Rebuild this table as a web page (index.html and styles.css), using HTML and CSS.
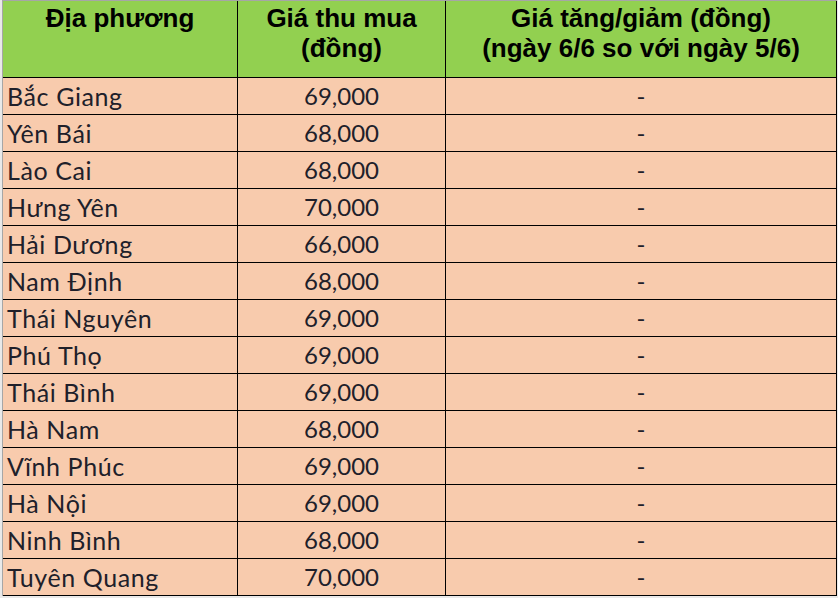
FILE: index.html
```html
<!DOCTYPE html>
<html lang="vi">
<head>
<meta charset="utf-8">
<title>Giá thu mua</title>
<link rel="stylesheet" href="styles.css">
</head>
<body>
<div class="sheet">
  <div class="grid" role="table">
    <div class="cell head" role="columnheader">Địa phương</div>
    <div class="cell head" role="columnheader">Giá thu mua<br>(đồng)</div>
    <div class="cell head" role="columnheader">Giá tăng/giảm (đồng)<br>(ngày 6/6 so với ngày 5/6)</div>

    <div class="cell name">Bắc Giang</div><div class="cell num">69,000</div><div class="cell dash">-</div>
    <div class="cell name">Yên Bái</div><div class="cell num">68,000</div><div class="cell dash">-</div>
    <div class="cell name">Lào Cai</div><div class="cell num">68,000</div><div class="cell dash">-</div>
    <div class="cell name">Hưng Yên</div><div class="cell num">70,000</div><div class="cell dash">-</div>
    <div class="cell name">Hải Dương</div><div class="cell num">66,000</div><div class="cell dash">-</div>
    <div class="cell name">Nam Định</div><div class="cell num">68,000</div><div class="cell dash">-</div>
    <div class="cell name">Thái Nguyên</div><div class="cell num">69,000</div><div class="cell dash">-</div>
    <div class="cell name">Phú Thọ</div><div class="cell num">69,000</div><div class="cell dash">-</div>
    <div class="cell name">Thái Bình</div><div class="cell num">69,000</div><div class="cell dash">-</div>
    <div class="cell name">Hà Nam</div><div class="cell num">68,000</div><div class="cell dash">-</div>
    <div class="cell name">Vĩnh Phúc</div><div class="cell num">69,000</div><div class="cell dash">-</div>
    <div class="cell name">Hà Nội</div><div class="cell num">69,000</div><div class="cell dash">-</div>
    <div class="cell name">Ninh Bình</div><div class="cell num">68,000</div><div class="cell dash">-</div>
    <div class="cell name">Tuyên Quang</div><div class="cell num">70,000</div><div class="cell dash">-</div>
  </div>
</div>
</body>
</html>
```

FILE: styles.css
```css
html, body {
  margin: 0;
  padding: 0;
  background: #ffffff;
}

.sheet {
  width: 838px;
  height: 598px;
  background: #e9e9e9;
  padding-left: 2px;
  box-sizing: border-box;
  overflow: hidden;
}

.grid {
  display: grid;
  grid-template-columns: 235px 208px 391px;
  grid-template-rows: 77px repeat(14, 37px);
  width: max-content;
  border-left: 1px solid #a6a6a6;
  border-top: 1px solid #a6a6a6;
  background: #f8cbad;
}

.cell {
  box-sizing: border-box;
  border-right: 1px solid #000;
  border-bottom: 1px solid #000;
  background: #f8cbad;
  font-family: Lato, "Noto Sans", sans-serif;
  font-size: 24px;
  line-height: 36px;
  color: #20202a;
  white-space: nowrap;
  overflow: hidden;
}

.head {
  background: #92d050;
  font-family: "Liberation Sans", Arial, sans-serif;
  font-weight: bold;
  font-size: 26px;
  line-height: 30px;
  color: #000;
  text-align: center;
  padding-top: 2px;
}

.name {
  padding-left: 4px;
  font-size: 25px;
  letter-spacing: 0.6px;
}

.num {
  text-align: center;
}

.dash {
  text-align: center;
}
```
